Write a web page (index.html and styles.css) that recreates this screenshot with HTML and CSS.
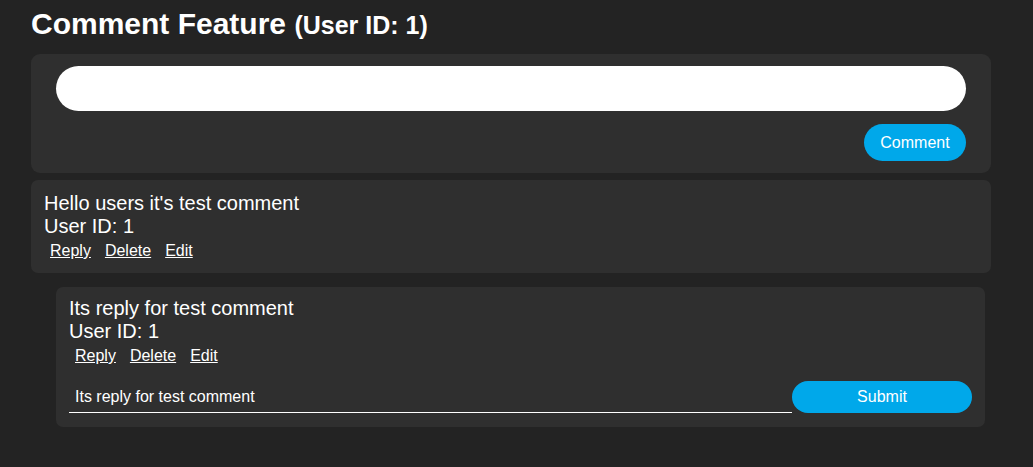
FILE: index.html
```html
<!DOCTYPE html>
<html lang="en">
<head>
<meta charset="utf-8">
<title>Comment Feature</title>
<link rel="stylesheet" href="styles.css">
</head>
<body>
<div class="app">
  <h1 class="title">Comment Feature <span class="title-sub">(User ID: 1)</span></h1>

  <form class="composer">
    <input class="composer-input" type="text">
    <div class="composer-actions">
      <button class="btn btn-comment" type="button">Comment</button>
    </div>
  </form>

  <div class="comment">
    <div class="comment-text">Hello users it's test comment</div>
    <div class="comment-user">User ID: 1</div>
    <div class="comment-links">
      <a class="link" href="#">Reply</a><a class="link" href="#">Delete</a><a class="link" href="#">Edit</a>
    </div>
  </div>

  <div class="comment reply">
    <div class="comment-text">Its reply for test comment</div>
    <div class="comment-user">User ID: 1</div>
    <div class="comment-links">
      <a class="link" href="#">Reply</a><a class="link" href="#">Delete</a><a class="link" href="#">Edit</a>
    </div>
    <div class="reply-row">
      <input class="reply-input" type="text" value="Its reply for test comment">
      <button class="btn btn-submit" type="button">Submit</button>
    </div>
  </div>
</div>
</body>
</html>
```

FILE: styles.css
```css
html, body {
  margin: 0;
  padding: 0;
  background: #232323;
  color: #ffffff;
  font-family: "Liberation Sans", Arial, sans-serif;
}

.app {
  width: 960px;
  margin-left: 31px;
  padding-top: 6px;
}

.title {
  margin: 0 0 11px 0;
  font-size: 30px;
  font-weight: bold;
  line-height: 35px;
}

.title-sub {
  font-size: 25px;
}

.composer {
  background: #2f2f2f;
  border-radius: 9px;
  padding: 12px 25px 12px 25px;
  margin: 0;
}

.composer-input {
  display: block;
  box-sizing: border-box;
  width: 100%;
  height: 45px;
  border: none;
  border-radius: 23px;
  background: #ffffff;
  outline: none;
  padding: 0 20px;
  font-family: inherit;
  font-size: 16px;
}

.composer-actions {
  display: flex;
  justify-content: flex-end;
  margin-top: 13px;
}

.btn {
  border: none;
  background: #00a8ea;
  color: #ffffff;
  font-family: "Liberation Sans", Arial, sans-serif;
  font-size: 16px;
  cursor: pointer;
}

.btn-comment {
  height: 37px;
  width: 102px;
  border-radius: 19px;
  padding: 0;
}

.comment {
  background: #2f2f2f;
  border-radius: 7px;
  margin-top: 7px;
  padding: 12px 12px 13px 13px;
  font-size: 20px;
  line-height: 23px;
}

.comment-links {
  display: flex;
  gap: 2px;
  margin-top: 4px;
  font-size: 16px;
  line-height: 18px;
}

.link {
  color: #ffffff;
  text-decoration: underline;
  padding: 0 6px;
}

.reply {
  width: 929px;
  box-sizing: border-box;
  margin-top: 14px;
  margin-left: 25px;
  padding: 10px 13px 14px 13px;
}

.reply-row {
  display: flex;
  align-items: flex-end;
  margin-top: 16px;
}

.reply-input {
  flex: 1;
  min-width: 0;
  box-sizing: border-box;
  height: 32px;
  background: transparent;
  border: none;
  border-bottom: 1px solid #ffffff;
  color: #ffffff;
  font-family: "Liberation Sans", Arial, sans-serif;
  font-size: 16px;
  padding: 0 6px;
  outline: none;
}

.btn-submit {
  width: 180px;
  height: 32px;
  border-radius: 16px;
  padding: 0;
}
```
